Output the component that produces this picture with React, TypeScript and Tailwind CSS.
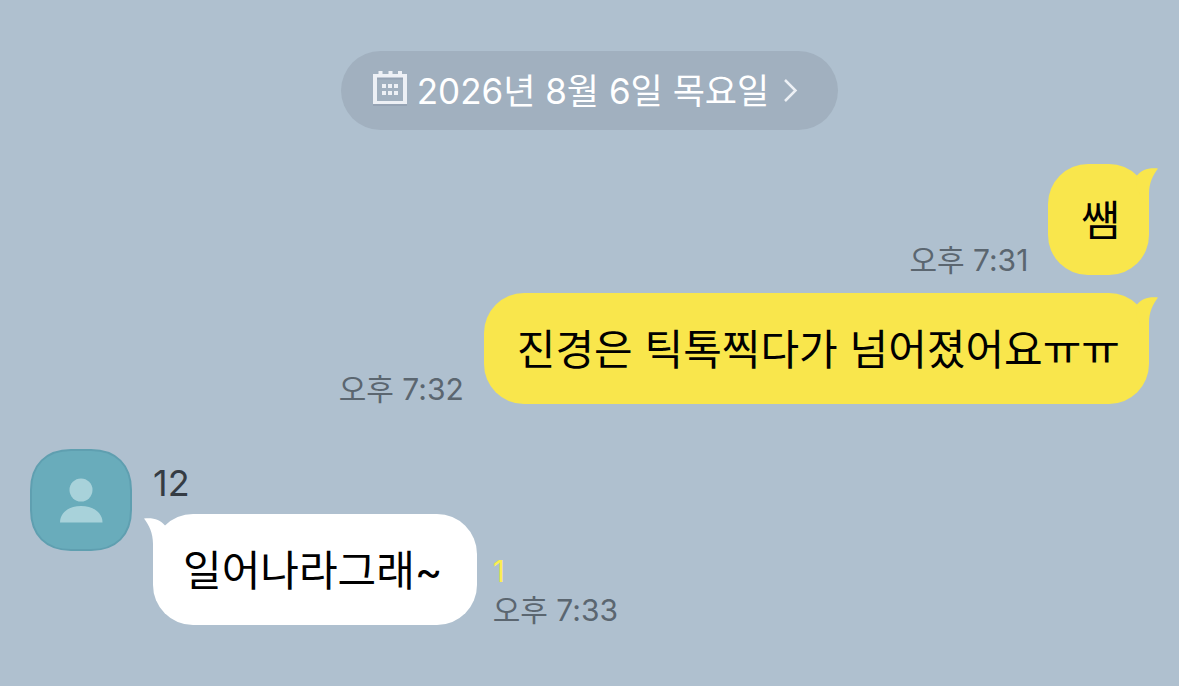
import React from "react";
import { clsx } from "clsx";

type Side = "mine" | "theirs";

interface BubbleProps {
  side: Side;
  text: string;
}

interface MyMessageProps {
  text: string;
  time: string;
}

function CalendarIcon() {
  return (
    <svg
      viewBox="0 0 36 44"
      className="h-11 w-9 shrink-0 text-[#edf0f5]"
      fill="currentColor"
      aria-hidden="true"
    >
      <path
        fillRule="evenodd"
        d="M1 6h34v30H1zM5 9.500v23h26v-23z"
        fill="#8492a4"
        fillOpacity="0.4"
      />
      <path
        fillRule="evenodd"
        d="M1 4h5.500V1h4v3h6V1h4v3h5.500V1h4v3H35v30H1zM5 7.500V31h26V7.500z"
      />
      <path d="M10 14h4v4h-4zM16 14h4v4h-4zM22 14h4v4h-4zM10 21h4v4h-4zM16 21h4v4h-4zM22 21h4v4h-4z" />
    </svg>
  );
}

function ChevronIcon() {
  return (
    <svg
      viewBox="0 0 16 26"
      className="h-[26px] w-4 shrink-0"
      fill="none"
      stroke="#edf0f5"
      strokeWidth="2.500"
      aria-hidden="true"
    >
      <path d="M2 1l10.500 10.500L2 22" />
    </svg>
  );
}

function Avatar() {
  return (
    <svg
      viewBox="0 0 102 102"
      className="size-[102px] shrink-0"
      role="img"
      aria-label="12"
    >
      <path
        d="M41 1h20C86 1 101 16 101 41v20c0 25-15 40-40 40H41C16 101 1 86 1 61V41C1 16 16 1 41 1z"
        fill="#69acbb"
        stroke="#5f9fb0"
        strokeWidth="2"
      />
      <circle cx="51" cy="41" r="11.500" fill="#a8d2da" />
      <path d="M30 73.500c0-10 9-16.500 21-16.500s21.500 6.500 21.500 16.500z" fill="#a8d2da" />
    </svg>
  );
}

function Bubble({ side, text }: BubbleProps) {
  const mine = side === "mine";
  return (
    <div
      className={clsx(
        "relative rounded-[40px] pt-[25px] pb-[23px] text-[42px] leading-[63px] text-black",
        mine ? "bg-[#f9e64c] pr-[29px] pl-[33px]" : "bg-white pr-[34px] pl-[30px]"
      )}
    >
      {text}
      {/* Tail */}
      <svg
        viewBox="0 0 30 40"
        className={clsx(
          "absolute top-1 h-10 w-[30px]",
          mine ? "-right-[9px] text-[#f9e64c]" : "-left-[9px] -scale-x-100 text-white"
        )}
        fill="currentColor"
        aria-hidden="true"
      >
        <path d="M9 7.500C14 2 20-0.500 30 0.500C25 7 21 15 21 26v14L8 20z" />
      </svg>
    </div>
  );
}

function Time({ children }: { children: React.ReactNode }) {
  return (
    <time className="whitespace-nowrap text-[30px] leading-[30px] text-[#5b6670]">
      {children}
    </time>
  );
}

function MyMessage({ text, time }: MyMessageProps) {
  return (
    <li className="flex items-end justify-end gap-5">
      <Time>{time}</Time>
      <Bubble side="mine" text={text} />
    </li>
  );
}

export default function App() {
  return (
    <main className="min-h-screen bg-[#afc0cf] px-[30px] pt-[51px] pb-12 font-['Inter','Noto_Sans_CJK_KR',sans-serif]">
      <div className="flex justify-center">
        <button
          type="button"
          className="flex items-center gap-[9px] rounded-full bg-[#a1b0bf] pt-[13px] pr-[39px] pb-[11px] pl-[31px] text-[35px] leading-[55px] text-white"
        >
          <CalendarIcon />
          <span className="whitespace-nowrap">2026년 8월 6일 목요일</span>
          <span className="pl-[5px]">
            <ChevronIcon />
          </span>
        </button>
      </div>

      <ul className="mt-[34px] flex flex-col gap-[18px]">
        <MyMessage text="쌤" time="오후 7:31" />
        <MyMessage text="진경은 틱톡찍다가 넘어졌어요ㅠㅠ" time="오후 7:32" />

        <li className="mt-[27px] flex items-start gap-[21px]">
          <Avatar />
          <div className="pt-3">
            <p className="text-[36px] leading-[44px] text-[#353c44]">12</p>
            <div className="mt-[9px] flex items-end gap-4">
              <Bubble side="theirs" text="일어나라그래~" />
              <div className="flex flex-col gap-1">
                <span className="text-[30px] leading-10 text-[#fbee4f]">1</span>
                <Time>오후 7:33</Time>
              </div>
            </div>
          </div>
        </li>
      </ul>
    </main>
  );
}
